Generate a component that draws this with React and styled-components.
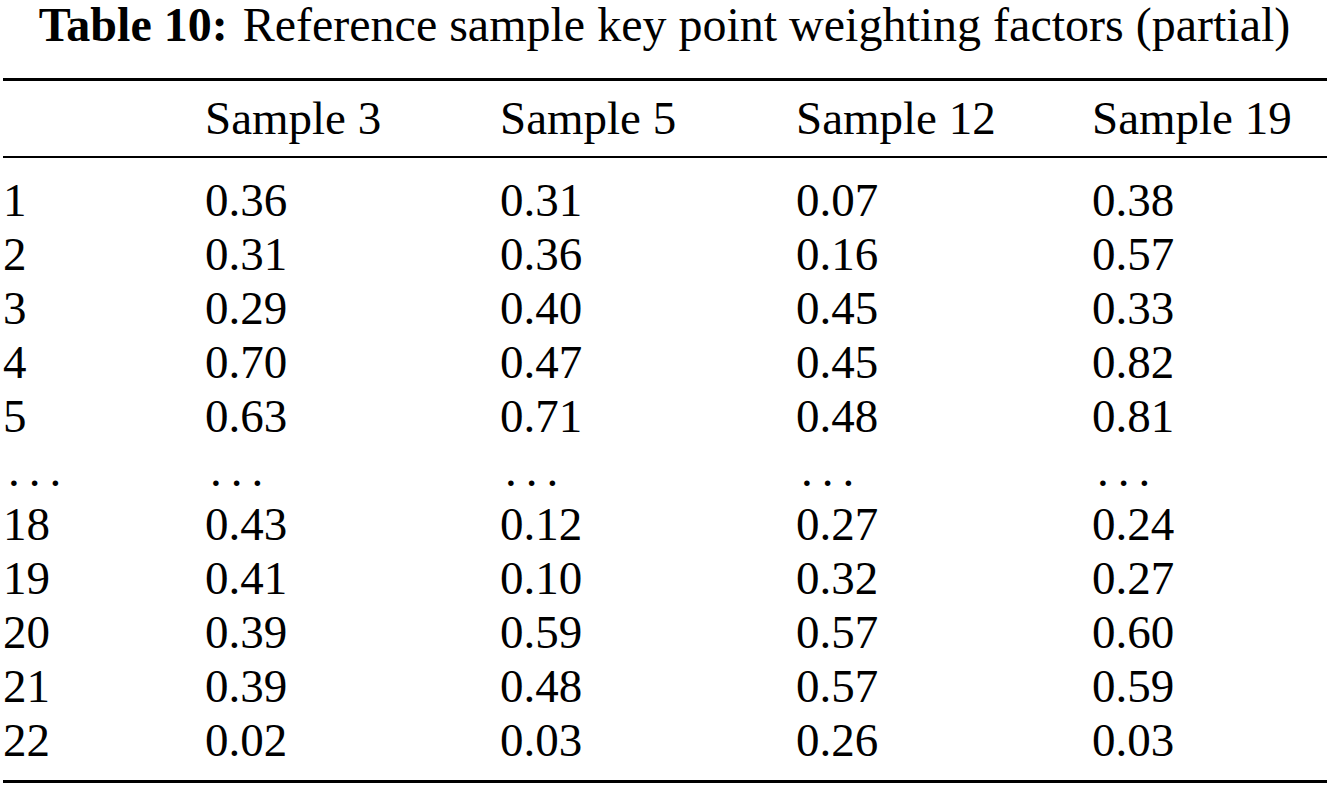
import React from 'react';
import styled, { createGlobalStyle } from 'styled-components';

const GlobalStyle = createGlobalStyle`
  html, body {
    margin: 0;
    padding: 0;
    background: #ffffff;
  }
  body {
    font-family: "Liberation Serif", "Times New Roman", serif;
    color: #000000;
  }
`;

const columns = ['Sample 3', 'Sample 5', 'Sample 12', 'Sample 19'];

const rows = [
  ['1', '0.36', '0.31', '0.07', '0.38'],
  ['2', '0.31', '0.36', '0.16', '0.57'],
  ['3', '0.29', '0.40', '0.45', '0.33'],
  ['4', '0.70', '0.47', '0.45', '0.82'],
  ['5', '0.63', '0.71', '0.48', '0.81'],
  null, // the "..." row
  ['18', '0.43', '0.12', '0.27', '0.24'],
  ['19', '0.41', '0.10', '0.32', '0.27'],
  ['20', '0.39', '0.59', '0.57', '0.60'],
  ['21', '0.39', '0.48', '0.57', '0.59'],
  ['22', '0.02', '0.03', '0.26', '0.03'],
];

const App = () => {
  return (
    <Page>
      <GlobalStyle />
      <Caption>
        <CaptionLabel>Table 10:</CaptionLabel> Reference sample key point weighting factors (partial)
      </Caption>
      <Table>
        <Head>
          <Row $head>
            <Cell />
            {columns.map((c) => (
              <Cell key={c}>{c}</Cell>
            ))}
          </Row>
        </Head>
        <Body>
          {rows.map((r, i) =>
            r ? (
              <Row key={i}>
                {r.map((v, j) => (
                  <Cell key={j}>{v}</Cell>
                ))}
              </Row>
            ) : (
              <Row key={i}>
                {[0, 1, 2, 3, 4].map((j) => (
                  <Dots key={j}>...</Dots>
                ))}
              </Row>
            )
          )}
        </Body>
      </Table>
    </Page>
  );
};

const Page = styled.div`
  width: 1329px;
  font-size: 47px;
`;

const Caption = styled.div`
  height: 50px;
  line-height: 50px;
  margin-bottom: 28px;
  font-size: 48px;
  text-align: center;
  white-space: nowrap;
`;

const CaptionLabel = styled.span`
  font-weight: bold;
  margin-right: 3px;
`;

const Table = styled.div`
  margin-left: 3px;
  width: 1324px;
`;

const Head = styled.div`
  border-top: 3px solid #000;
  border-bottom: 2px solid #000;
`;

const Body = styled.div`
  padding: 15px 0 13px;
  border-bottom: 3px solid #000;
`;

const Row = styled.div`
  display: grid;
  grid-template-columns: 202px 295px 296px 296px 1fr;
  height: ${(p) => (p.$head ? '75px' : '54px')};
  line-height: ${(p) => (p.$head ? '75px' : '54px')};
`;

const Cell = styled.div`
  white-space: nowrap;
`;

const Dots = styled(Cell)`
  padding-left: 5px;
  letter-spacing: 9px;
`;

export default App;
